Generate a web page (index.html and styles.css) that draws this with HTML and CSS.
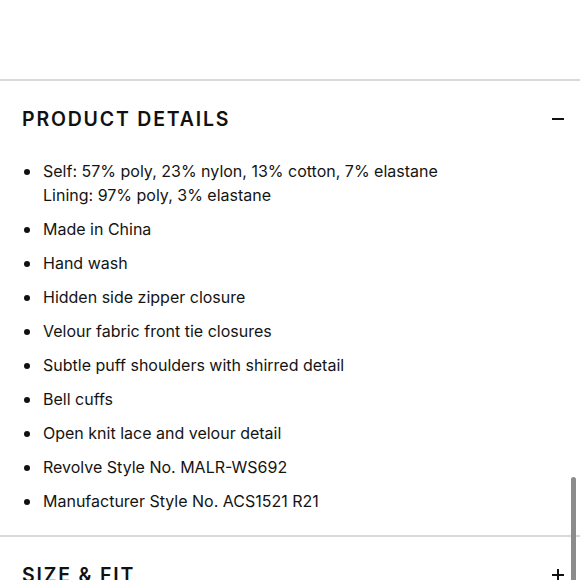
FILE: index.html
```html
<!DOCTYPE html>
<html>
<head>
<meta charset="utf-8">
<link rel="stylesheet" href="styles.css">
</head>
<body>
<div class="page">
  <div class="top-space"></div>
  <section class="acc open">
    <div class="acc-head">
      <h2 class="acc-title">PRODUCT DETAILS</h2>
      <span class="icon minus"></span>
    </div>
    <ul class="details">
      <li>Self: 57% poly, 23% nylon, 13% cotton, 7% elastane<br>Lining: 97% poly, 3% elastane</li>
      <li>Made in China</li>
      <li>Hand wash</li>
      <li>Hidden side zipper closure</li>
      <li>Velour fabric front tie closures</li>
      <li>Subtle puff shoulders with shirred detail</li>
      <li>Bell cuffs</li>
      <li>Open knit lace and velour detail</li>
      <li>Revolve Style No. MALR-WS692</li>
      <li>Manufacturer Style No. ACS1521 R21</li>
    </ul>
  </section>
  <section class="acc">
    <div class="acc-head">
      <h2 class="acc-title">SIZE &amp; FIT</h2>
      <span class="icon plus"></span>
    </div>
  </section>
  <div class="scrollbar"></div>
</div>
</body>
</html>
```
FILE: styles.css
```css
html, body {
  margin: 0;
  padding: 0;
  background: #fff;
}
body {
  font-family: "Inter", "Open Sans", sans-serif;
  color: #161616;
  overflow: hidden;
}
.page {
  position: relative;
  width: 580px;
  height: 580px;
  overflow: hidden;
}
.top-space {
  height: 79px;
  border-bottom: 2px solid #d9d9d9;
}
.acc {
  border-bottom: 2px solid #d9d9d9;
}
.acc-head {
  display: flex;
  align-items: center;
  justify-content: space-between;
  padding: 26px 16px 0 22px;
  height: 24px;
}
.acc-title {
  margin: 0;
  font-size: 19.5px;
  font-weight: 600;
  letter-spacing: 1.8px;
  line-height: 24px;
  color: #111;
}
.icon {
  position: relative;
  width: 12px;
  height: 12px;
}
.icon::before, .plus::after {
  content: "";
  position: absolute;
  left: 0;
  top: 5px;
  width: 12px;
  height: 2px;
  background: #111;
}
.plus::after {
  left: 5px;
  top: 0;
  width: 2px;
  height: 12px;
}
.details {
  list-style: none;
  margin: 0;
  padding: 28px 0 22px 43px;
  display: flex;
  flex-direction: column;
  gap: 10px;
}
.details li {
  position: relative;
  font-size: 16px;
  line-height: 24px;
  color: #141414;
}
.details li::before {
  content: "";
  position: absolute;
  left: -19px;
  top: 9.5px;
  width: 6px;
  height: 6px;
  border-radius: 50%;
  background: #111;
}
.scrollbar {
  position: absolute;
  left: 571px;
  top: 477px;
  width: 5px;
  height: 110px;
  border-radius: 3px;
  background: #8c8c8c;
}
```
